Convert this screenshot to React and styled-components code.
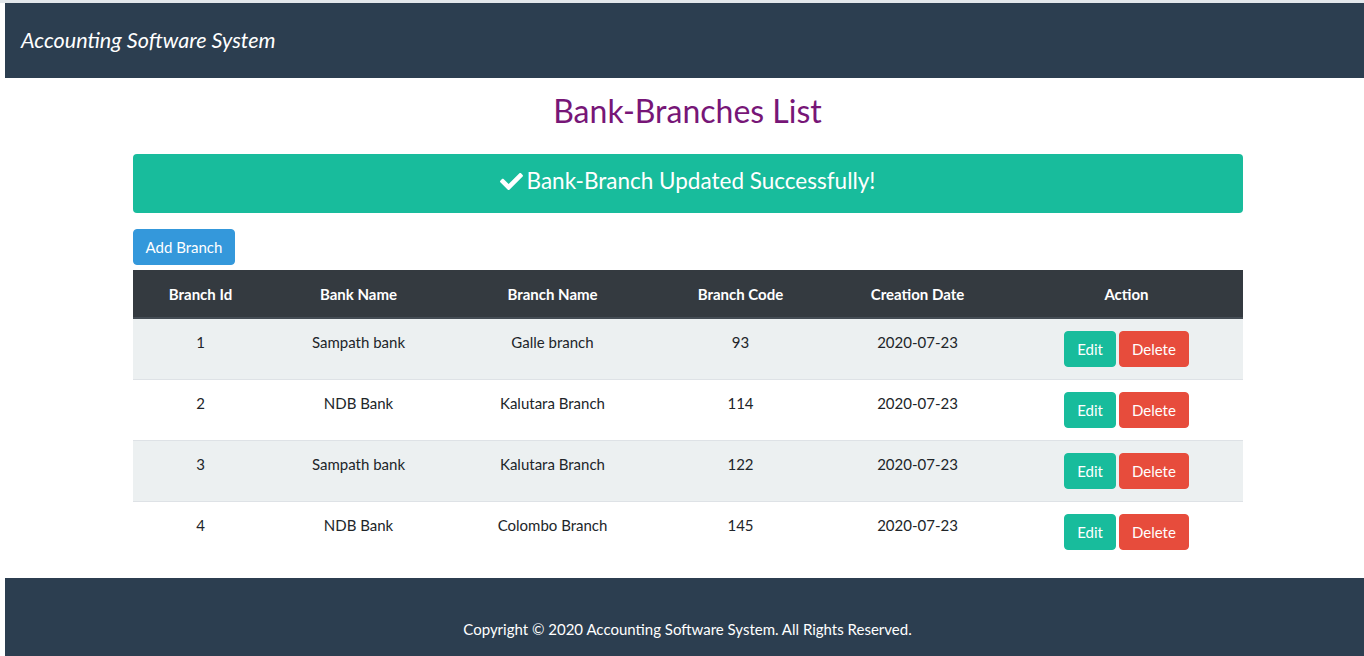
import React from 'react'
import styled, { createGlobalStyle } from 'styled-components'
import { FaCheck } from 'react-icons/fa'

const GlobalStyle = createGlobalStyle`
  html, body {
    margin: 0;
    padding: 0;
    background: #fff;
  }
  body {
    border-top: 3px solid #e2e7eb;
    padding-left: 5px;
    font-family: Lato, "Open Sans", "Liberation Sans", sans-serif;
    font-size: 15px;
    line-height: 1.5;
    color: #212529;
  }
  * { box-sizing: border-box; }
`

const branches = [
  { id: 1, bank: 'Sampath bank', branch: 'Galle branch', code: 93, date: '2020-07-23' },
  { id: 2, bank: 'NDB Bank', branch: 'Kalutara Branch', code: 114, date: '2020-07-23' },
  { id: 3, bank: 'Sampath bank', branch: 'Kalutara Branch', code: 122, date: '2020-07-23' },
  { id: 4, bank: 'NDB Bank', branch: 'Colombo Branch', code: 145, date: '2020-07-23' },
]

const columns = [
  { title: 'Branch Id', width: 136 },
  { title: 'Bank Name', width: 180 },
  { title: 'Branch Name', width: 208 },
  { title: 'Branch Code', width: 168 },
  { title: 'Creation Date', width: 186 },
  { title: 'Action', width: 232 },
]

function App() {
  return (
    <>
      <GlobalStyle />
      <Navbar>
        <Brand>Accounting Software System</Brand>
      </Navbar>

      <Container>
        <Titulo>Bank-Branches List</Titulo>

        <Alerta>
          <FaCheck size={23} />
          <span>Bank-Branch Updated Successfully!</span>
        </Alerta>

        <Boton $color="#3498db">Add Branch</Boton>

        <Tabla>
          <colgroup>
            {columns.map(c => <col key={c.title} style={{ width: c.width }} />)}
          </colgroup>
          <thead>
            <tr>
              {columns.map(c => <Th key={c.title}>{c.title}</Th>)}
            </tr>
          </thead>
          <tbody>
            {branches.map((b, i) => (
              <Fila key={b.id} $striped={i % 2 === 0}>
                <Td>{b.id}</Td>
                <Td>{b.bank}</Td>
                <Td>{b.branch}</Td>
                <Td>{b.code}</Td>
                <Td>{b.date}</Td>
                <Td>
                  <Acciones>
                    <Boton $color="#18bc9c">Edit</Boton>
                    <Boton $color="#e74c3c">Delete</Boton>
                  </Acciones>
                </Td>
              </Fila>
            ))}
          </tbody>
        </Tabla>
      </Container>

      <Footer>
        <Container>
          <FooterTexto>Copyright © 2020 Accounting Software System. All Rights Reserved.</FooterTexto>
        </Container>
      </Footer>
    </>
  )
}

export default App

const Navbar = styled.nav`
  background-color: #2c3e50;
  height: 75px;
  display: flex;
  align-items: center;
  padding: 0 16px;
`

const Brand = styled.a`
  color: #fff;
  font-size: 21.6px;
  font-style: italic;
  text-decoration: none;
`

const Container = styled.div`
  width: 1110px;
  margin: 0 auto;
  position: relative;
  left: 3px;
`

const Titulo = styled.h2`
  color: #771677;
  font-size: 32px;
  font-weight: 400;
  line-height: 1.2;
  text-align: center;
  margin: 14px 0 24px;
`

const Alerta = styled.div`
  background-color: #18bc9c;
  color: #fff;
  border-radius: 4px;
  height: 59px;
  display: flex;
  align-items: center;
  justify-content: center;
  gap: 4px;
  font-size: 22.5px;
  padding-bottom: 7px;
  margin-bottom: 16px;

  svg {
    margin-top: 2px;
  }
`

const Boton = styled.button`
  display: inline-block;
  background-color: ${p => p.$color};
  border: 1px solid ${p => p.$color};
  color: #fff;
  font-family: inherit;
  font-size: 15px;
  line-height: 22px;
  padding: 6px 12px;
  border-radius: 4px;
  cursor: pointer;
`

const Tabla = styled.table`
  width: 100%;
  table-layout: fixed;
  border-collapse: collapse;
  margin-top: 5px;
`

const Th = styled.th`
  background-color: #343a40;
  color: #fff;
  font-weight: 700;
  padding: 12px;
  height: 48px;
  text-align: center;
  vertical-align: middle;
  border-bottom: 2px solid #454d55;
`

const Fila = styled.tr`
  background-color: ${p => (p.$striped ? '#ecf0f1' : '#fff')};
`

const Td = styled.td`
  padding: 12px;
  text-align: center;
  vertical-align: top;
  border-top: 1px solid #dee2e6;
  line-height: 1.5;
`

const Acciones = styled.div`
  display: flex;
  justify-content: center;
  gap: 3px;
`

const Footer = styled.footer`
  background-color: #2c3e50;
  margin-top: 16px;
  padding: 40px 0;
`

const FooterTexto = styled.p`
  color: #fff;
  text-align: center;
  margin: 0;
`
